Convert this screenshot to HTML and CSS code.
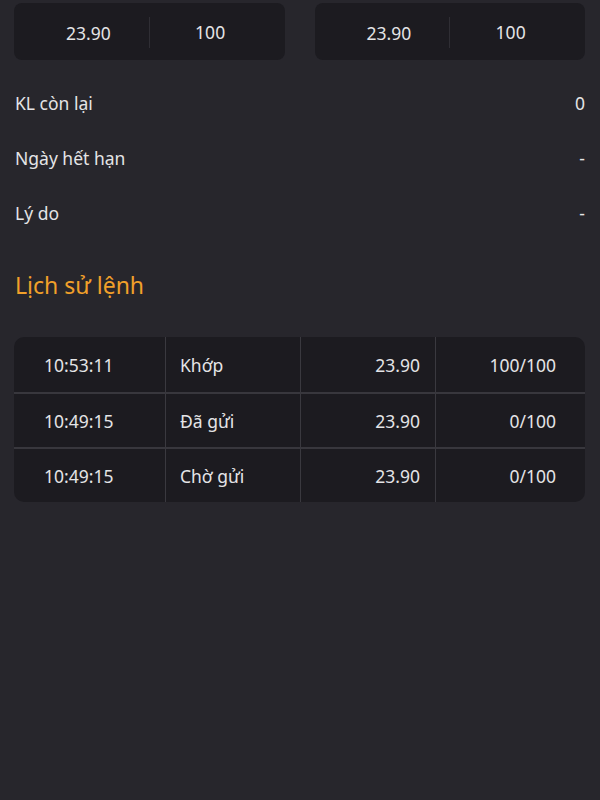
FILE: index.html
```html
<!DOCTYPE html>
<html lang="vi">
<head>
  <meta charset="UTF-8">
  <meta name="viewport" content="width=device-width, initial-scale=1">
  <title>Chi tiết lệnh</title>
  <link rel="stylesheet" href="styles.css">
</head>
<body>

  <!-- price / volume boxes -->
  <div class="quotes">
    <div class="quote">
      <span class="quote-cell">23.90</span>
      <span class="quote-cell">100</span>
    </div>
    <div class="quote">
      <span class="quote-cell">23.90</span>
      <span class="quote-cell">100</span>
    </div>
  </div>

  <div class="info">
    <div class="info-row"><span>KL còn lại</span><span>0</span></div>
    <div class="info-row"><span>Ngày hết hạn</span><span>-</span></div>
    <div class="info-row"><span>Lý do</span><span>-</span></div>
  </div>

  <h2 class="title">Lịch sử lệnh</h2>

  <div class="history">
    <div class="history-row">
      <span class="c-time">10:53:11</span>
      <span class="c-status">Khớp</span>
      <span class="c-price">23.90</span>
      <span class="c-qty">100/100</span>
    </div>
    <div class="history-row">
      <span class="c-time">10:49:15</span>
      <span class="c-status">Đã gửi</span>
      <span class="c-price">23.90</span>
      <span class="c-qty">0/100</span>
    </div>
    <div class="history-row">
      <span class="c-time">10:49:15</span>
      <span class="c-status">Chờ gửi</span>
      <span class="c-price">23.90</span>
      <span class="c-qty">0/100</span>
    </div>
  </div>

</body>
</html>
```

FILE: styles.css
```css
body {
  margin: 0;
  padding: 3px 15px 0 14px;
  min-height: 800px;
  box-sizing: border-box;
  background: #27262c;
  color: #e4e4e6;
  font-family: "Noto Sans", "Open Sans", sans-serif;
  font-size: 17.5px;
}

/* top boxes */
.quotes {
  display: grid;
  grid-template-columns: 1fr 1fr;
  gap: 30px;
}

.quote {
  display: flex;
  align-items: center;
  height: 57px;
  padding: 2px 14px 0 14px;
  box-sizing: border-box;
  background: #1c1b20;
  border-radius: 8px;
}

.quote-cell {
  flex: 1;
  text-align: center;
}

.quote-cell + .quote-cell {
  border-left: 1px solid #2f2e34;
  line-height: 31px;
}

/* info rows */
.info {
  margin-top: 15px;
}

.info-row {
  display: flex;
  justify-content: space-between;
  align-items: center;
  height: 55px;
  padding-left: 1px;
}

.title {
  margin: 29px 0 0 1px;
  color: #f1a02a;
  font-size: 23px;
  font-weight: 400;
  line-height: 32px;
}

/* history table */
.history {
  margin-top: 36px;
  background: #1c1b20;
  border-radius: 10px;
  overflow: hidden;
}

.history-row {
  display: grid;
  grid-template-columns: 151px 135px 135px 1fr;
  height: 55px;
}

.history-row + .history-row {
  border-top: 2px solid #38373d;
  height: 55px;
  box-sizing: border-box;
}

.history-row span {
  display: flex;
  align-items: center;
}

.history-row span + span {
  border-left: 1px solid #3a393f;
}

.c-time {
  padding-left: 30px;
}

.c-status {
  padding-left: 14px;
}

.c-price {
  justify-content: flex-end;
  padding-right: 15px;
}

.c-qty {
  justify-content: flex-end;
  padding-right: 29px;
}
```
